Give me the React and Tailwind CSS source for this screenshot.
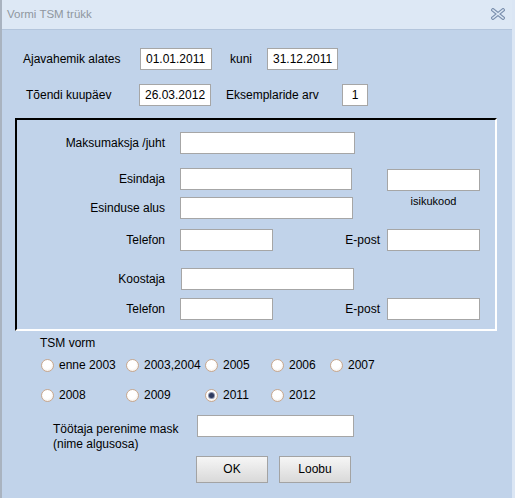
import React from 'react';

function Field({ w, value, center, className = '' }) {
  return (
    <div
      className={`h-[22px] shrink-0 border border-[#a6a6a6] bg-white px-[5px] leading-[20px] ${center ? 'text-center' : ''} ${className}`}
      style={{ width: w }}
    >
      {value}
    </div>
  );
}

function Radio({ label, checked }) {
  return (
    <div className="flex items-center">
      <span className="flex h-[13px] w-[13px] shrink-0 items-center justify-center rounded-full border border-[#c9a88e] bg-[radial-gradient(circle_at_45%_40%,#ffffff_45%,#eee4da)]">
        {checked && <span className="h-[5px] w-[5px] rounded-full bg-[#2f3a5e] shadow-[0_0_0_1px_#8d94ad]" />}
      </span>
      <span className="ml-[5px]">{label}</span>
    </div>
  );
}

function Btn({ children }) {
  return (
    <button className="h-[27px] w-[72px] border border-[#a3a3a3] bg-gradient-to-b from-[#f6f6f6] to-[#d9d9d9] text-[12px] leading-[25px] text-black">
      {children}
    </button>
  );
}

export default function App() {
  return (
    <div className="h-[498px] w-[515px] overflow-hidden border-l-2 border-r-[3px] border-l-[#a9b3c0] border-r-[#dbe6f4] bg-[#c1d3ea] font-['Liberation_Sans',Arial,sans-serif] text-[12px] text-black">
      {/* title bar */}
      <div className="flex h-[30px] items-center justify-between border-b border-[#b3c5dc] bg-[#dde8f5] pl-[5px] pr-[7px]">
        <span className="text-[11.5px] text-[#8f979f]">Vormi TSM trükk</span>
        <svg width="14" height="12" viewBox="0 0 14 12" className="mb-[1px]">
          <path d="M2 2 L12 10 M12 2 L2 10" stroke="#7b90ae" strokeWidth="3.6" strokeLinecap="square" fill="none" />
          <path d="M2 2 L12 10 M12 2 L2 10" stroke="#dde8f5" strokeWidth="1.6" strokeLinecap="square" fill="none" />
        </svg>
      </div>

      {/* period */}
      <div className="mt-[18px] ml-[21px] flex items-center">
        <span className="w-[117px]">Ajavahemik alates</span>
        <Field w={72} value="01.01.2011" />
        <span className="ml-[18px] w-[37px]">kuni</span>
        <Field w={71} value="31.12.2011" />
      </div>

      <div className="mt-[14px] ml-[24px] flex items-center">
        <span className="w-[113px]">Tõendi kuupäev</span>
        <Field w={72} value="26.03.2012" />
        <span className="ml-[15px] w-[116px]">Eksemplaride arv</span>
        <Field w={26} value="1" center />
      </div>

      {/* framed block */}
      <div className="mt-[12px] ml-[13px] w-[482px] border-2 border-t-black border-l-black border-r-white border-b-white pt-[12px] pb-[9px]">
        <div className="flex items-center">
          <span className="w-[148px] text-right">Maksumaksja /juht</span>
          <Field w={175} className="ml-[15px]" />
        </div>

        <div className="mt-[14px] flex items-start">
          <div>
            <div className="flex items-center">
              <span className="w-[148px] text-right">Esindaja</span>
              <Field w={172} className="ml-[15px]" />
            </div>
            <div className="mt-[7px] flex items-center">
              <span className="w-[148px] text-right">Esinduse alus</span>
              <Field w={173} className="ml-[15px]" />
            </div>
          </div>
          <div className="ml-[34px] mt-[1px] flex flex-col items-center">
            <Field w={93} />
            <span className="mt-[2px] text-[11px]">isikukood</span>
          </div>
        </div>

        <div className="mt-[10px] flex items-center">
          <span className="w-[148px] text-right">Telefon</span>
          <Field w={93} className="ml-[15px]" />
          <span className="w-[107px] text-right">E-post</span>
          <Field w={93} className="ml-[7px]" />
        </div>

        <div className="mt-[17px] flex items-center">
          <span className="w-[148px] text-right">Koostaja</span>
          <Field w={173} className="ml-[16px]" />
        </div>

        <div className="mt-[8px] flex items-center">
          <span className="w-[148px] text-right">Telefon</span>
          <Field w={93} className="ml-[15px]" />
          <span className="w-[107px] text-right">E-post</span>
          <Field w={93} className="ml-[7px]" />
        </div>
      </div>

      {/* TSM vorm */}
      <div className="mt-[5px] ml-[38px] leading-[14px]">TSM vorm</div>
      <div className="mt-[6px] ml-[39px] grid h-[16px] grid-cols-[85px_79px_66px_59px_80px] items-center">
        <Radio label="enne 2003" />
        <Radio label="2003,2004" />
        <Radio label="2005" />
        <Radio label="2006" />
        <Radio label="2007" />
      </div>
      <div className="mt-[14px] ml-[39px] grid h-[16px] grid-cols-[85px_79px_66px_59px_80px] items-center">
        <Radio label="2008" />
        <Radio label="2009" />
        <Radio label="2011" checked />
        <Radio label="2012" />
      </div>

      <div className="mt-[13px] ml-[51px] flex items-start">
        <div className="mt-[7px] w-[144px] leading-[15px]">
          Töötaja perenime mask
          <br />
          (nime algusosa)
        </div>
        <Field w={157} className="h-[21px]" />
      </div>

      <div className="mt-[4px] ml-[194px] flex gap-[11px]">
        <Btn>OK</Btn>
        <Btn>Loobu</Btn>
      </div>
    </div>
  );
}
